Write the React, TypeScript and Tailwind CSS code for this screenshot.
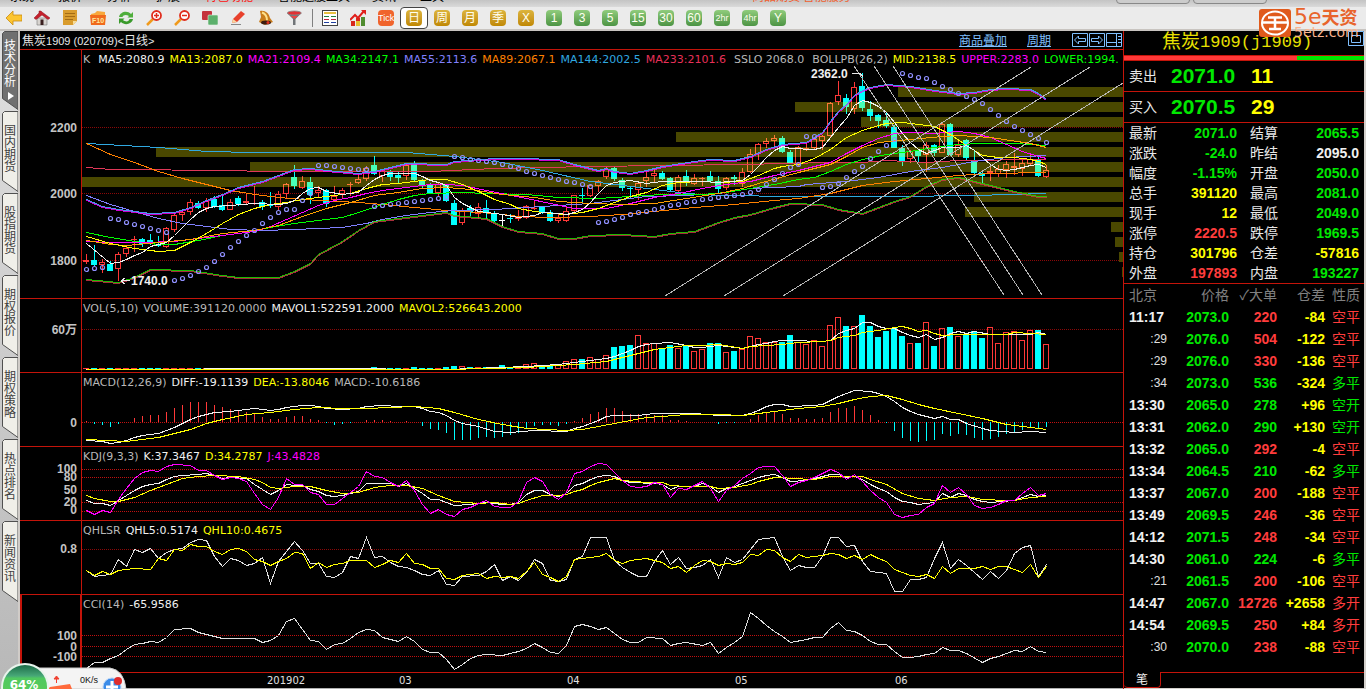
import React from "react";

const STEP = 8;
const xAt = (i: number) => 4 + i * STEP;

// [high, body top, body bottom, low, kind] kind: 1 up, 0 down, 2 flat
const CANDLES: number[][] = [
  [204, 210, 212, 214, 1], [195, 210, 215, 216, 0], [209, 212, 215, 223, 1], [211, 214, 221, 221, 0], [202, 204, 219, 231, 1],
  [196, 198, 204, 207, 1], [186, 189, 190, 202, 1], [188, 189, 194, 197, 0], [184, 190, 193, 195, 0], [186, 195, 196, 197, 0],
  [177, 178, 197, 198, 1], [163, 165, 180, 182, 1], [159, 162, 165, 171, 1], [149, 152, 162, 165, 1], [151, 153, 158, 159, 0],
  [148, 151, 158, 162, 1], [146, 149, 157, 158, 0], [145, 155, 160, 161, 0], [149, 152, 160, 160, 1], [146, 148, 154, 156, 0],
  [144, 151, 153, 154, 1], [136, 153, 154, 155, 1], [150, 152, 157, 160, 0], [142, 154, 156, 158, 0], [141, 144, 157, 160, 1],
  [133, 134, 144, 148, 1], [115, 127, 136, 139, 0], [126, 131, 138, 139, 1], [127, 132, 145, 154, 0], [136, 140, 143, 148, 1],
  [139, 140, 154, 157, 0], [136, 146, 150, 152, 1], [138, 140, 144, 148, 1], [132, 134, 135, 146, 1], [124, 129, 133, 134, 1],
  [116, 118, 129, 131, 1], [106, 115, 124, 125, 0], [119, 121, 126, 132, 1], [120, 121, 127, 131, 0], [122, 125, 128, 133, 0],
  [114, 115, 126, 130, 1], [111, 114, 130, 132, 0], [129, 130, 136, 139, 0], [133, 134, 143, 144, 0], [132, 134, 143, 146, 1],
  [134, 135, 151, 152, 0], [150, 153, 175, 175, 0], [158, 160, 173, 175, 1], [155, 158, 162, 166, 0], [153, 157, 164, 169, 1],
  [150, 158, 163, 169, 0], [161, 164, 171, 172, 0], [165, 170, 171, 176, 2], [164, 168, 169, 173, 0], [160, 167, 169, 171, 1],
  [155, 156, 168, 169, 1], [151, 158, 159, 160, 1], [157, 157, 162, 164, 0], [160, 162, 171, 172, 0], [164, 168, 171, 173, 1],
  [157, 161, 171, 172, 1], [145, 145, 161, 162, 1], [138, 145, 146, 152, 0], [134, 135, 146, 147, 1], [130, 131, 136, 142, 1],
  [117, 119, 127, 129, 1], [117, 118, 129, 131, 0], [128, 130, 138, 141, 0], [136, 138, 139, 148, 0], [132, 133, 140, 150, 1],
  [121, 127, 131, 137, 1], [119, 123, 126, 132, 1], [121, 123, 129, 130, 0], [127, 128, 140, 141, 0], [125, 127, 141, 142, 1],
  [120, 126, 132, 136, 0], [124, 128, 134, 135, 1], [127, 128, 129, 136, 1], [121, 126, 131, 133, 0], [126, 131, 139, 144, 0],
  [127, 128, 138, 140, 1], [125, 127, 129, 135, 0], [118, 122, 134, 137, 1], [99, 104, 122, 123, 1], [93, 94, 104, 110, 1],
  [88, 91, 94, 98, 1], [85, 88, 91, 96, 1], [86, 88, 102, 103, 0], [100, 102, 113, 114, 0], [96, 97, 115, 116, 1],
  [92, 98, 99, 101, 1], [87, 89, 98, 99, 1], [85, 86, 91, 100, 1], [52, 53, 86, 88, 1], [31, 45, 52, 55, 1],
  [44, 48, 57, 64, 0], [32, 37, 59, 64, 1], [23, 36, 58, 61, 0], [51, 59, 66, 71, 0], [64, 65, 71, 78, 0],
  [62, 70, 76, 78, 0], [75, 77, 98, 98, 0], [95, 98, 111, 116, 0], [100, 101, 109, 113, 1], [100, 101, 106, 112, 0],
  [92, 95, 105, 122, 1], [94, 95, 103, 106, 0], [73, 74, 103, 103, 1], [73, 74, 105, 106, 0], [91, 95, 105, 107, 1],
  [89, 90, 108, 110, 0], [100, 111, 123, 124, 0], [121, 123, 126, 133, 0], [117, 121, 123, 131, 1], [115, 119, 124, 127, 1],
  [111, 114, 120, 128, 1], [103, 116, 118, 125, 1], [110, 113, 119, 126, 1], [104, 109, 114, 115, 1], [105, 110, 126, 127, 0],
  [115, 120, 127, 128, 1],
];

// volume profile: [left, top]
const PROFILE = [
  [816, 37], [713, 52], [779, 67], [594, 82], [74, 97], [168, 112], [0, 127],
  [892, 142], [883, 157], [1029, 172], [1033, 187], [1037, 202], [1040, 217],
];

const SAR = [
  219, 218, 217, 168, 169, 172, 174, 176, 178, 180, 182, 230, 228, 225, 221, 217, 211, 204, 197, 191, 185, 180, 173, 167,
  162, 159, 159, 150, 143, 115, 115, 116, 117, 118, 119, 119, 156, 155, 154, 153, 152, 151, 150, 149, 148, 147, 106, 107,
  109, 110, 111, 112, 114, 116, 118, 121, 123, 125, 127, 129, 131, 132, 134, 136, 172, 171, 169, 167, 164, 162, 161, 159,
  157, 155, 154, 152, 151, 149, 148, 147, 146, 145, 144, 142, 139, 134, 129, 123, 117, 114, 86, 86, 137, 136, 133, 127,
  121, 116, 108, 101, 95, 89, 23, 25, 27, 28, 32, 36, 39, 43, 46, 49, 53, 59, 65, 71, 76, 80, 84, 88, 92,
];

const UPPER =
  "0,149 2,156 4,159 8,163 11,162 13,157 15,150 17,144 19,137 22,131 24,125 26,119 28,118 30,120 34,123 36,121 38,117 40,113 45,114 46,111 51,108 54,108 59,109 61,114 63,118 64,120 65,118 66,121 68,123 70,120 72,116 76,111 78,109 81,110 83,106 85,99 87,94 90,92 91,87 92,82 93,71 94,61 95,54 96,45 97,40 98,37 100,34 103,36 106,40 109,43 111,42 113,39 115,38 118,39 119,43 120,49";
const LOWER =
  "0,229 4,232 6,227 8,219 13,220 17,225 19,227 24,227 26,221 28,213 29,204 32,191 34,180 36,171 39,168 42,165 45,162 46,165 50,168 52,176 54,181 57,183 59,188 61,188 63,185 67,184 71,186 73,183 76,181 79,172 81,167 83,164 86,157 88,153 92,154 94,159 97,163 99,157 101,151 103,146 105,136 107,129 109,127 111,131 114,137 116,141 119,146 120,146";

const MA_LINES: [string, string][] = [
  ["#e03858", "0,117 3,119 18,120 22,121 43,121 51,118 63,116 82,114 93,112 97,112 100,110 105,112 109,110 120,109"],
  ["#30a8e0", "0,93 9,97 15,101 21,102 40,102 46,106 51,111 52,112 57,120 63,131 67,135 71,139 75,143 79,145 89,146 101,146 111,145 120,143"],
  ["#ff8000", "0,93 3,104 6,112 9,121 12,128 15,134 18,140 21,144 24,147 29,150 34,152 37,154 41,157 45,160 51,163 54,166 58,167 63,166 67,164 71,161 76,157 81,154 86,150 89,148 93,143 97,135 101,131 105,128 109,125 113,123 120,122"],
  ["#8080ff", "0,145 3,154 6,161 9,168 12,173 15,176 18,179 22,180 26,179 32,177 35,173 37,169 40,165 43,162 46,160 51,159 55,157 59,155 63,153 67,149 70,146 75,145 79,143 83,138 89,136 90,134 95,131 99,127 103,121 107,117 111,111 115,107 120,105"],
  ["#00ff00", "0,182 3,187 6,191 9,194 11,194 14,190 17,185 20,182 23,177 26,173 29,170 32,167 34,162 37,154 39,149 41,145 43,143 47,142 50,143 55,144 59,147 64,148 68,146 72,144 77,144 80,142 83,138 86,134 89,129 91,127 93,121 95,114 97,109 100,104 103,101 106,97 109,94 112,93 116,93 120,95"],
  ["#ff00ff", "0,191 3,192 7,192 11,191 15,187 19,183 21,181 23,176 25,169 27,162 29,155 31,150 33,147 35,143 37,140 39,138 41,136 43,134 45,134 47,135 50,140 55,148 58,153 61,158 65,158 68,153 71,147 74,143 77,138 80,134 83,131 86,125 89,120 93,112 95,103 97,95 99,88 101,83 103,82 106,83 109,81 111,83 113,87 115,94 117,101 119,106 120,108"],
  ["#ffa000", "0,190 3,194 5,195 9,192 13,189 17,183 21,180 24,175 27,166 30,158 33,152 36,145 39,142 42,138 45,137 48,139 52,144 56,147 59,151 63,153 67,154 71,153 75,148 79,143 82,138 84,133 89,122 93,114 95,106 97,97 99,92 103,89 107,86 109,85 113,87 118,93 120,97"],
  ["#ffff00", "0,186 3,193 6,198 9,201 11,200 13,192 15,183 17,173 19,164 21,158 23,154 25,152 27,149 29,147 31,145 33,143 35,138 37,134 39,133 41,131 43,129 45,129 47,134 49,141 51,149 53,154 54,158 56,161 58,163 60,164 62,162 64,158 66,152 68,146 70,142 72,135 74,132 77,131 79,132 82,131 84,125 86,118 87,116 89,114 91,108 93,99 95,87 97,80 99,75 100,73 102,72 104,74 106,76 107,80 108,84 110,95 112,105 114,107 116,107 118,109 119,111 120,114"],
  ["#f0f0f0", "0,193 3,213 4,212 5,209 6,205 7,202 8,196 9,194 10,192 11,185 12,177 13,169 14,162 15,158 16,156 18,155 21,153 24,154 25,153 26,150 27,143 28,138 29,137 30,141 32,144 34,142 35,135 36,129 37,125 38,123 41,123 42,126 43,130 44,132 45,135 46,147 47,153 48,157 49,161 50,162 51,163 52,164 54,167 56,165 57,162 59,163 60,164 61,162 62,159 63,152 64,143 65,135 66,132 68,130 70,133 72,131 77,131 79,132 82,130 83,124 84,116 85,107 86,100 87,96 88,98 91,99 92,97 93,87 94,77 95,68 96,55 97,50 98,52 99,56 100,62 101,72 102,83 103,92 104,99 105,103 106,100 107,97 109,97 110,95 111,100 112,107 113,114 114,119 115,120 116,119 117,117 118,115 119,114 120,117"],
];

const TRENDS = [
  [583, 246, 949, 17], [642, 246, 1008, 17], [701, 246, 1041, 33],
  [772, 16, 922, 245], [792, 16, 941, 245], [811, 16, 960, 245],
];

const VOLUME = [
  1, 1, 1, 1, 1, 1, 1, 1, 1, 1, 1, 1, 1, 1, 1, 1, 1, 1, 1, 1, 1, 1, 1, 1, 1, 1, 1, 1, 1, 1, 1, 1, 1, 1, 1, 1, 2, 1, 1, 1,
  1, 2, 1, 1, 1, 2, 3, 3, 2, 2, 2, 2, 4, 2, 2, 5, 6, 3, 4, 5, 8, 10, 10, 12, 10, 14, 22, 23, 24, 34, 26, 26, 21, 24, 21,
  24, 18, 20, 26, 26, 17, 18, 20, 33, 31, 27, 27, 27, 34, 27, 25, 29, 23, 44, 52, 43, 43, 54, 43, 32, 38, 41, 33, 26, 26,
  47, 23, 41, 42, 33, 35, 38, 31, 42, 26, 37, 38, 29, 39, 39, 25,
];
const VOL_LINES: [string, string][] = [
  ["#f0f0f0", "0,70 30,69 45,70 55,67 59,65 61,63 63,61 65,59 66,57 67,54 68,51 69,47 70,45 71,44 73,43 75,46 76,48 77,48 79,46 81,48 82,49 83,47 84,45 85,44 86,42 87,41 89,41 91,42 92,42 93,41 94,34 95,31 96,29 97,23 98,23 99,27 100,29 101,29 102,33 103,36 104,38 105,35 106,40 107,38 108,34 109,32 110,34 111,32 113,35 115,35 118,35 119,33 120,35"],
  ["#ffff00", "0,70 45,70 55,68 61,65 65,62 67,58 69,54 71,50 73,48 75,46 77,46 79,45 82,49 83,47 85,46 87,45 89,43 92,42 93,41 94,38 96,36 97,33 98,32 99,31 101,28 102,27 103,29 104,32 105,31 106,34 107,36 109,35 112,35 115,35 116,33 120,35"],
];

const MACD = [
  1, -2, -3, -5, -2, 0, 4, 6, 7, 7, 10, 14, 17, 20, 20, 20, 17, 15, 13, 11, 10, 8, 5, 3, 3, 5, 6, 6, 3, 2, -1, -3, -2, -1,
  0, 2, 2, 2, 1, 0, 1, 0, -4, -7, -8, -11, -18, -18, -18, -16, -15, -16, -15, -13, -11, -6, -4, -3, -3, -4, -2, 1, 4, 8,
  10, 14, 14, 11, 8, 8, 7, 7, 7, 2, 2, 1, 0, 0, 0, -2, -1, -1, 0, 3, 7, 9, 11, 8, 4, 4, 3, 3, 4, 10, 14, 14, 16, 12, 7,
  2, -1, -9, -16, -19, -20, -19, -18, -12, -14, -12, -13, -16, -18, -17, -15, -12, -10, -8, -6, -7, -5,
];
const MACD_LINES: [string, string][] = [
  ["#f0f0f0", "0,67 2,68 3,70 4,69 5,67 6,64 7,62 9,60 10,57 11,54 12,50 13,46 14,43 15,41 16,39 18,38 21,35 23,37 24,36 25,34 27,32 28,32 29,33 30,35 32,36 34,35 35,33 37,32 39,33 41,33 42,35 43,38 44,39 45,42 46,47 47,50 49,53 51,58 53,59 56,57 60,58 61,55 62,53 63,50 64,47 65,43 66,42 69,42 71,40 73,40 76,40 79,42 82,42 83,40 84,37 85,33 86,31 87,31 88,33 91,32 92,31 93,27 94,23 95,20 96,17 98,18 99,20 100,23 101,28 102,34 103,38 104,41 105,43 106,45 107,43 108,46 109,46 110,50 112,55 113,57 116,59 118,58 120,59"],
  ["#ffff00", "0,66 5,68 9,64 11,60 13,56 15,50 17,46 20,41 23,39 26,36 29,34 32,35 35,35 38,34 41,33 44,35 46,39 49,46 52,51 55,55 60,57 62,56 64,53 66,50 68,47 70,44 72,43 75,41 79,41 82,42 85,39 87,37 89,35 92,33 94,30 95,28 96,26 98,23 100,22 102,26 104,31 106,35 109,40 112,45 115,51 118,54 120,56"],
];

const KDJ_LINES: [string, string][] = [
  ["#f0f0f0", "0,53 1,56 2,56 3,58 4,53 5,48 6,43 7,39 8,37 9,36 10,32 11,29 12,28 14,27 15,26 16,28 17,31 18,30 20,31 21,37 22,42 23,47 24,43 25,37 26,38 27,38 28,42 29,44 30,48 31,49 32,48 33,46 34,44 35,36 38,36 39,39 40,36 41,41 42,46 43,52 44,52 45,55 46,58 48,57 50,55 52,57 53,57 54,55 55,47 56,43 57,43 58,47 59,49 60,46 61,38 62,36 63,32 64,29 65,28 66,29 67,33 68,35 71,36 72,37 73,42 74,39 76,39 77,36 78,39 79,45 80,41 81,39 82,36 83,33 84,30 85,28 86,27 87,30 88,34 90,33 92,29 93,27 94,27 95,30 96,29 97,32 98,37 99,41 100,44 101,50 102,54 103,55 104,57 105,56 106,55 107,46 108,50 109,46 110,48 111,52 112,54 113,55 116,53 117,50 118,47 119,49 120,48"],
  ["#ffff00", "0,48 1,51 3,54 4,54 6,50 8,43 10,37 12,31 14,29 16,28 19,29 21,32 22,35 23,40 24,41 26,39 28,39 30,43 32,46 34,45 36,40 38,38 40,38 42,41 44,48 46,54 49,56 51,55 53,57 54,56 55,53 57,48 59,48 60,47 61,44 62,42 63,38 64,35 65,33 66,31 67,33 70,35 72,35 73,38 75,39 78,39 79,41 81,40 83,37 84,34 86,30 87,30 88,31 91,32 93,29 97,29 98,32 100,37 102,46 104,51 106,53 108,50 110,49 112,52 115,53 116,53 118,50 120,49"],
  ["#ff00ff", "0,63 1,67 2,63 3,65 4,52 5,41 6,31 7,25 8,23 9,24 10,19 11,17 13,18 14,23 15,23 16,28 17,32 18,30 19,31 20,34 21,46 22,57 23,62 24,50 25,31 26,37 27,37 28,45 29,47 30,57 31,57 32,51 33,45 34,39 35,24 36,29 37,30 38,35 39,39 40,33 41,43 42,57 43,66 44,62 45,67 46,69 47,62 48,60 49,56 50,53 51,59 52,60 53,60 54,54 55,35 56,30 57,34 58,47 59,52 60,45 61,26 62,24 63,19 64,16 65,17 66,25 67,33 68,39 69,40 70,39 71,35 72,37 73,50 74,41 75,42 76,38 77,34 78,41 79,54 80,43 81,38 82,31 83,26 84,20 85,19 86,19 87,28 88,39 89,35 90,33 91,30 92,26 93,22 94,25 95,32 96,27 97,34 98,43 99,50 100,55 101,67 102,70 103,68 104,67 105,60 106,56 107,38 108,45 109,40 110,47 111,58 112,61 113,60 114,57 115,53 116,53 117,46 118,40 119,48 120,46"],
];

const QHL_LINES: [string, string][] = [
  ["#e0e0e0", "0,49 1,55 2,54 3,53 4,38 5,45 6,28 7,31 8,27 9,37 10,31 11,28 12,27 13,21 14,18 15,19 16,35 17,45 18,37 19,39 20,44 21,42 22,36 23,62 24,40 25,30 26,20 27,29 28,42 29,42 30,55 31,56 32,51 33,35 34,37 35,16 36,36 37,35 38,41 39,45 40,46 41,49 42,53 43,54 44,49 45,63 46,64 47,55 49,54 50,50 51,43 52,59 53,55 54,59 55,51 56,38 57,42 58,59 59,60 60,58 61,38 62,35 63,16 65,16 66,39 67,46 68,51 69,55 70,55 71,40 72,29 73,43 74,36 75,47 76,46 77,44 78,38 79,56 80,36 81,41 82,38 83,28 84,18 86,16 87,35 88,49 89,44 90,46 91,46 92,35 93,16 94,16 95,25 96,24 97,40 98,50 99,51 100,52 101,70 102,70 103,58 104,58 105,56 106,37 107,21 108,47 109,38 110,44 111,51 112,58 113,50 114,57 115,49 116,32 117,26 118,24 119,55 120,43"],
  ["#ffff00", "0,49 1,54 2,50 3,53 4,49 6,47 8,48 9,37 10,39 11,28 12,29 13,23 14,25 15,25 16,30 17,33 18,28 19,27 20,30 21,38 22,40 23,44 24,40 25,37 26,31 27,32 28,47 29,41 30,46 31,43 32,42 33,39 35,39 36,46 37,43 38,39 39,41 40,32 41,42 42,43 43,47 44,47 45,57 46,58 47,54 49,52 50,57 51,55 52,56 53,55 54,57 55,50 56,41 57,53 58,56 59,60 60,55 61,38 62,37 63,36 64,35 65,32 66,39 67,42 68,39 70,37 72,41 73,47 74,45 75,51 76,44 77,39 78,40 79,44 80,42 81,43 82,41 83,33 84,34 85,28 86,29 87,36 88,40 89,33 90,36 92,34 93,32 94,33 95,37 96,34 97,38 98,33 99,37 100,40 101,48 102,51 103,54 104,55 105,53 106,57 107,45 108,52 109,47 111,47 112,45 113,48 114,45 115,45 116,48 117,51 118,43 119,56 120,45"],
];

const CCI_LINES: [string, string][] = [
  ["#e0e0e0", "0,73 1,67 2,67 3,63 4,60 5,54 6,49 7,48 8,46 9,47 10,42 11,34 13,33 14,37 15,39 17,43 21,43 22,47 23,45 24,40 25,26 26,23 27,34 28,45 29,46 30,54 31,49 32,48 33,43 34,37 35,34 36,35 37,42 38,44 39,46 40,41 41,46 42,54 43,57 44,57 45,64 46,74 47,69 48,63 49,60 50,59 52,60 54,56 55,53 56,48 57,52 58,57 59,58 60,50 61,31 62,29 63,31 64,34 65,32 66,38 67,44 68,47 69,47 70,42 72,43 73,50 74,48 75,47 77,50 78,47 79,58 80,52 81,47 82,41 83,17 84,23 85,30 86,36 87,41 88,47 90,44 91,42 92,42 93,33 94,27 95,35 96,36 97,40 98,46 99,49 100,49 101,56 102,62 103,62 104,61 105,59 106,58 107,52 108,55 109,55 110,58 112,67 113,63 114,61 115,58 116,55 117,56 118,51 119,56 120,57"],
];

function Line({ pts, color, dy = 0, opacity }: { pts: string; color: string; dy?: number; opacity?: number }) {
  const points = pts
    .split(" ")
    .map((p) => {
      const [i, y] = p.split(",").map(Number);
      return `${xAt(i) + 0.5},${y + dy + 0.5}`;
    })
    .join(" ");
  return <polyline points={points} fill="none" stroke={color} opacity={opacity} />;
}

function Lines({ data }: { data: [string, string][] }) {
  return (
    <>
      {data.map(([color, pts]) => (
        <Line key={color} pts={pts} color={color} />
      ))}
    </>
  );
}

function Candles({ up, down }: { up: string; down: string }) {
  return (
    <>
      {CANDLES.map(([h, t, b, l, kind], i) => {
        const x = xAt(i);
        if (b - t <= 1) {
          const c = kind === 2 ? "#ffffff" : kind ? up : down;
          return (
            <path key={i} d={`M${x + 0.5} ${h}V${l}M${x - 3} ${t + 0.5}h6`} stroke={c} fill="none" />
          );
        }
        if (kind === 0) {
          return (
            <g key={i} fill={down}>
              <rect x={x} y={h} width={1} height={l - h} />
              <rect x={x - 3} y={t} width={6} height={b - t} />
            </g>
          );
        }
        return (
          <path
            key={i}
            d={`M${x + 0.5} ${h}V${t}M${x + 0.5} ${b}V${l}M${x - 2.5} ${t + 0.5}h5v${b - t - 1}h-5z`}
            stroke={up}
            fill="none"
          />
        );
      })}
    </>
  );
}

type Item = { text: string; className: string };

function Legend({ items }: { items: Item[] }) {
  return (
    <div className="absolute inset-x-0 top-0 flex gap-[5px] overflow-hidden pl-px font-['DejaVu_Sans',sans-serif] text-[11px] leading-5 whitespace-nowrap">
      {items.map((it) => (
        <span key={it.text} className={it.className}>
          {it.text}
        </span>
      ))}
    </div>
  );
}

function Panel({
  height,
  ticks,
  grid,
  gridColor = "#c01010",
  legend,
  active,
  children,
}: {
  height: string;
  ticks: [string, number][];
  grid: number[];
  gridColor?: string;
  legend: Item[];
  active?: boolean;
  children: React.ReactNode;
}) {
  return (
    <section className={`flex border-t border-[#c4140a] ${height}`}>
      <div
        className={`w-[62px] shrink-0 border-r ${
          active ? "border-r-2 border-l-2 border-[#c4140a]" : "border-[#c4140a]"
        }`}
      >
        <svg className={active ? "ml-[-2px] h-full w-[61px]" : "h-full w-[61px]"}>
          <g
            fill="#c4c4c4"
            textAnchor="end"
            className="font-['Liberation_Sans','Noto_Sans_CJK_SC',sans-serif] text-[12px] font-bold"
          >
            {ticks.map(([label, y]) => (
              <text key={label} x={57} y={y + 4}>
                {label}
              </text>
            ))}
          </g>
        </svg>
      </div>
      <div className="relative min-w-0 flex-1">
        <svg className="block h-full w-full" shapeRendering="crispEdges">
          {grid.map((y) => (
            <line key={y} x1="0" x2="100%" y1={y + 0.5} y2={y + 0.5} stroke={gridColor} strokeDasharray="1 1" />
          ))}
          {children}
        </svg>
        <Legend items={legend} />
      </div>
    </section>
  );
}

const WHITE = "text-[#f0f0f0]";
const GREY = "text-[#b8b8b8]";
const YELLOW = "text-[#ffff00]";
const MAGENTA = "text-[#ff00ff]";

function Charts() {
  return (
    <>
      <Panel
        height="h-[249px]"
        ticks={[["2200", 78], ["2000", 144], ["1800", 211]]}
        grid={[77, 143, 210]}
        gridColor="#8a0808"
        legend={[
          { text: "K", className: `${GREY} mr-[3px]` },
          { text: "MA5:2080.9", className: WHITE },
          { text: "MA13:2087.0", className: YELLOW },
          { text: "MA21:2109.4", className: MAGENTA },
          { text: "MA34:2147.1", className: "text-[#00ff00]" },
          { text: "MA55:2113.6", className: "text-[#8080ff]" },
          { text: "MA89:2067.1", className: "text-[#ff8000]" },
          { text: "MA144:2002.5", className: "text-[#30a8e0]" },
          { text: "MA233:2101.6", className: "text-[#e83058]" },
          { text: "SSLO 2068.0", className: `${GREY} mx-[3px]` },
          { text: "BOLLPB(26,2)", className: GREY },
          { text: "MID:2138.5", className: YELLOW },
          { text: "UPPER:2283.0", className: MAGENTA },
          { text: "LOWER:1994.", className: "text-[#00ff00]" },
        ]}
      >
        <defs>
          <clipPath id="profile">
            {PROFILE.map(([x, y]) => (
              <rect key={y} x={x} y={y} width={1400} height={10} />
            ))}
          </clipPath>
        </defs>
        {PROFILE.map(([x, y]) => (
          <rect key={y} x={x} y={y} width="100%" height={10} fill="#4a4800" />
        ))}
        <Candles up="#ff3838" down="#00ffff" />
        <g clipPath="url(#profile)">
          <Candles up="#ff7838" down="#48ffb8" />
        </g>
        <Lines data={MA_LINES} />
        <Line pts={UPPER} color="#ff00ff" dy={1} opacity={0.8} />
        <Line pts={UPPER} color="#4898f0" />
        <Line pts={LOWER} color="#20e800" opacity={0.8} />
        <Line pts={LOWER} color="#d03848" dy={1} opacity={0.8} />
        {SAR.map((y, i) => (
          <circle
            key={i}
            cx={xAt(i) + 0.5}
            cy={y + 0.5}
            r={2}
            fill="none"
            stroke="#9090ff"
            strokeWidth={1.2}
            shapeRendering="auto"
          />
        ))}
        {TRENDS.map(([x1, y1, x2, y2]) => (
          <line key={x1} x1={x1} y1={y1} x2={x2} y2={y2} stroke="#b8b8b8" />
        ))}
        <path d="M770 23.5h8l3 3M40 230.5h8M43 228l-4 3 4 3" stroke="#e8e8e8" fill="none" />
        <g fill="#f0f0f0" className="font-['Liberation_Sans',sans-serif] text-[12px] font-bold">
          <text x={729} y={28}>2362.0</text>
          <text x={49} y={235}>1740.0</text>
        </g>
      </Panel>

      <Panel
        height="h-[74px]"
        ticks={[["60万", 31]]}
        grid={[30]}
        gridColor="#8a0808"
        legend={[
          { text: "VOL(5,10)", className: GREY },
          { text: "VOLUME:391120.0000", className: GREY },
          { text: "MAVOL1:522591.2000", className: WHITE },
          { text: "MAVOL2:526643.2000", className: YELLOW },
        ]}
      >
        {VOLUME.map((h, i) =>
          CANDLES[i][4] === 1 && h > 2 ? (
            <rect key={i} x={xAt(i) - 2.5} y={70.5 - h} width={5} height={h - 1} fill="none" stroke="#ff3838" />
          ) : (
            <rect key={i} x={xAt(i) - 3} y={70 - h} width={6} height={h} fill={CANDLES[i][4] === 1 ? "#ff3838" : "#00ffff"} />
          )
        )}
        <Lines data={VOL_LINES} />
      </Panel>

      <Panel
        height="h-[74px]"
        ticks={[["0", 50]]}
        grid={[49]}
        legend={[
          { text: "MACD(12,26,9)", className: GREY },
          { text: "DIFF:-19.1139", className: WHITE },
          { text: "DEA:-13.8046", className: YELLOW },
          { text: "MACD:-10.6186", className: GREY },
        ]}
      >
        {MACD.map((v, i) => (
          <rect key={i} x={xAt(i)} y={v > 0 ? 49 - v : 49} width={1} height={Math.abs(v)} fill={v > 0 ? "#ff3838" : "#00ffff"} />
        ))}
        <Lines data={MACD_LINES} />
      </Panel>

      <Panel
        height="h-[74px]"
        ticks={[["100", 22], ["80", 30], ["50", 43], ["20", 55], ["0", 63]]}
        grid={[22, 30, 43, 55, 64]}
        legend={[
          { text: "KDJ(9,3,3)", className: GREY },
          { text: "K:37.3467", className: WHITE },
          { text: "D:34.2787", className: YELLOW },
          { text: "J:43.4828", className: MAGENTA },
        ]}
      >
        <Lines data={KDJ_LINES} />
      </Panel>

      <Panel
        height="h-[74px]"
        ticks={[["0.8", 28]]}
        grid={[28]}
        gridColor="#8a0808"
        legend={[
          { text: "QHLSR", className: GREY },
          { text: "QHL5:0.5174", className: WHITE },
          { text: "QHL10:0.4675", className: YELLOW },
        ]}
      >
        <Lines data={QHL_LINES} />
      </Panel>

      <Panel
        height="h-[78px]"
        active
        ticks={[["100", 41], ["0", 52], ["-100", 62]]}
        grid={[40, 51, 61]}
        legend={[
          { text: "CCI(14)", className: GREY },
          { text: "-65.9586", className: WHITE },
        ]}
      >
        <Lines data={CCI_LINES} />
      </Panel>

      <div className="h-4 border-t border-[#c4140a]">
        <svg className="block h-full w-full">
          <g fill="#e0e0e0" className="font-['DejaVu_Sans',sans-serif] text-[10px]">
            <text x={247} y={11}>201902</text>
            <text x={379} y={11}>03</text>
            <text x={547} y={11}>04</text>
            <text x={715} y={11}>05</text>
            <text x={875} y={11}>06</text>
          </g>
        </svg>
      </div>
    </>
  );
}

const TOOLS: { label: string; icon: React.ReactNode }[] = [
  { label: "后退", icon: <path d="M0 8l7-7v4h9v6H7v4z" fill="#fcc531" stroke="#c98a10" strokeWidth=".8" /> },
  {
    label: "首页",
    icon: (
      <>
        <path d="M3 8h10v7H3z" fill="#d8d4d0" stroke="#777" strokeWidth=".6" />
        <path d="M0 8l5-5V1h2l1 1 8 6-2 1.5L8 5 2 9.500z" fill="#c4202c" stroke="#8c1420" strokeWidth=".5" />
        <path d="M6.500 9.500h3V15h-3z" fill="#3a2020" />
      </>
    ),
  },
  {
    label: "便签",
    icon: (
      <>
        <path d="M1 0h14v11l-4 4H1z" fill="#d99c2e" />
        <path d="M15 11l-4 4v-4z" fill="#f6dc98" />
        <path d="M3 3.500h10M3 6.500h10M3 9.500h8" stroke="#a46c14" />
      </>
    ),
  },
  {
    label: "F10",
    icon: (
      <>
        <path d="M1 4l4-1 2-2 8 1v11l-13 2z" fill="#f8a83c" />
        <path d="M0 5h16l-1 10H1z" fill="#f06a1c" />
        <text x="8" y="13" textAnchor="middle" fontSize="7" fontWeight="bold" fill="#ffe9a0" fontFamily="Liberation Sans">F10</text>
      </>
    ),
  },
  {
    label: "刷新",
    icon: (
      <>
        <path d="M1 7c1-5 8-7 12-3l2-2v5.500H9.500l1.500-1.500C8 4 5 5 4.500 7z" fill="#4fae3c" />
        <path d="M15 9c-1 5-8 7-12 3l-2 2V8.500h5.500L5 10c3 2.500 6 1.500 6.500-1z" fill="#3a9a2c" />
      </>
    ),
  },
  {
    label: "放大",
    icon: (
      <>
        <path d="M7 9l-6 6" stroke="#f09a1c" strokeWidth="2.500" />
        <circle cx="10.500" cy="5.500" r="4.500" fill="#fff" stroke="#e02c1c" strokeWidth="1.800" />
        <path d="M8 5.500h5M10.500 3v5" stroke="#e02c1c" strokeWidth="1.500" />
      </>
    ),
  },
  {
    label: "缩小",
    icon: (
      <>
        <path d="M7 9l-6 6" stroke="#f09a1c" strokeWidth="2.500" />
        <circle cx="10.500" cy="5.500" r="4.500" fill="#fff" stroke="#e02c1c" strokeWidth="1.800" />
        <path d="M8 5.500h5" stroke="#e02c1c" strokeWidth="1.500" />
      </>
    ),
  },
  {
    label: "叠加",
    icon: (
      <>
        <rect x="0" y="1" width="10" height="9" rx="1" fill="#c4323c" />
        <rect x="6" y="5" width="10" height="10" rx="1" fill="#5cb06c" stroke="#e4f0e4" strokeWidth=".6" />
      </>
    ),
  },
  {
    label: "画线",
    icon: (
      <>
        <path d="M3 9l8-8 4 3-8 8-5 1z" fill="#e8402c" />
        <path d="M2 13l1-4 4 3z" fill="#f8d8a0" />
        <path d="M1 14.500h10" stroke="#888" />
      </>
    ),
  },
  {
    label: "预警",
    icon: (
      <>
        <path d="M2 1c5-1 9 2 10 7l3 4-8 3-6-3 2-5z" fill="#c87c1c" />
        <path d="M4 2.500c3 1 5 4 5 8" stroke="#ffe08a" strokeWidth="2" fill="none" />
        <ellipse cx="8" cy="12.500" rx="5" ry="2" fill="#3c1c10" />
        <circle cx="10" cy="12.500" r="1.500" fill="#e03020" />
      </>
    ),
  },
  {
    label: "筛选",
    icon: (
      <>
        <path d="M1 3l6 6v6h2.500V9l6-6z" fill="#707478" />
        <ellipse cx="8.300" cy="3" rx="7" ry="2" fill="#e03034" stroke="#888" strokeWidth=".8" />
        <path d="M4.500 6h7.500L8.500 9z" fill="#e44" />
      </>
    ),
  },
];

const PERIODS: { label: string; tone: "gold" | "green" }[] = [
  { label: "日", tone: "gold" },
  { label: "周", tone: "gold" },
  { label: "月", tone: "gold" },
  { label: "季", tone: "gold" },
  { label: "X", tone: "gold" },
  { label: "1", tone: "green" },
  { label: "3", tone: "green" },
  { label: "5", tone: "green" },
  { label: "15", tone: "green" },
  { label: "30", tone: "green" },
  { label: "60", tone: "green" },
  { label: "2hr", tone: "green" },
  { label: "4hr", tone: "green" },
  { label: "Y", tone: "green" },
];

function Toolbar() {
  return (
    <div className="flex h-6 items-center border-b-2 border-[#c8c4c0] bg-[#ebebeb]">
      {TOOLS.map((t) => (
        <button key={t.label} aria-label={t.label} className="flex w-7 justify-center">
          <svg width="16" height="16" viewBox="0 0 16 16">
            {t.icon}
          </svg>
        </button>
      ))}
      <div className="flex w-2 justify-center">
        <div className="h-[18px] w-px bg-[#808080]" />
      </div>
      <button aria-label="报价列表" className="flex w-7 justify-center">
        <svg width="16" height="16" viewBox="0 0 16 16">
          <rect x=".5" y=".5" width="15" height="15" fill="#fff" stroke="#444" />
          <path d="M2 3h12" stroke="#e8c040" strokeWidth="2" />
          <path d="M2 6.500h5M9 6.500h5" stroke="#208040" />
          <path d="M2 9.500h5M9 9.500h5" stroke="#c02040" />
          <path d="M2 12.500h5M9 12.500h5" stroke="#2040a0" />
        </svg>
      </button>
      <button aria-label="分时图" className="flex w-7 justify-center">
        <svg width="16" height="16" viewBox="0 0 16 16">
          <path d="M1 11h4v5H1zM6 8h4v8H6z" fill="#d8281c" />
          <path d="M6 11h4v5H6z" fill="#e8c030" />
          <path d="M11 7h4v9h-4z" fill="#508c30" />
          <path d="M0 10l5-5 3 3 6-7" stroke="#e0201c" strokeWidth="2" fill="none" />
          <path d="M11 0h5v5z" fill="#e0201c" />
        </svg>
      </button>
      <button className="flex w-7 justify-center">
        <span className="h-4 w-4 rounded-sm bg-[#f0642c] text-center font-['Liberation_Sans'] text-[9px] leading-4 text-white">
          Tick
        </span>
      </button>
      {PERIODS.map((p, i) => (
        <button
          key={p.label}
          className={`flex h-[22px] w-7 items-center justify-center ${
            i === 0 ? "rounded-sm border border-[#444] bg-white" : ""
          }`}
        >
          <span
            className={`h-4 w-4 rounded-sm bg-linear-to-b text-center font-['Liberation_Sans','Noto_Sans_CJK_SC',sans-serif] leading-4 text-[#fffff0] ${
              p.tone === "gold" ? "from-[#dcb43c] to-[#c08800]" : "from-[#90cc7c] to-[#4c9444]"
            } ${p.label.length > 2 ? "text-[9px]" : "text-[12px]"}`}
          >
            {p.label}
          </span>
        </button>
      ))}
    </div>
  );
}

function MenuBar() {
  return (
    <div className="relative flex h-[7px] items-end overflow-hidden bg-linear-to-b from-[#c4c4c4] to-[#dadada] pb-[5px] pl-[10px] font-['Noto_Sans_CJK_SC',sans-serif] text-[12px] leading-[13px] whitespace-nowrap text-black">
      <span className="w-[48px]">系统</span>
      <span className="w-[49px]">报价</span>
      <span className="w-[49px]">分析</span>
      <span className="w-[49px]">扩展</span>
      <span className="w-[73px] text-[#ff1010]">特色功能</span>
      <span className="w-[94px]">智能选股工具</span>
      <span className="w-[48px]">资讯</span>
      <span className="w-[332px]">工具</span>
      <span className="text-[#f06030]">商品期货 智能服务</span>
      <div className="absolute right-[176px] bottom-[3px] h-3 w-[74px] rounded border border-[#888] bg-[#ccc]" />
      <div className="absolute right-[99px] bottom-[3px] h-3 w-[74px] rounded border border-[#888] bg-[#ccc]" />
    </div>
  );
}

const SIDE_TABS = ["技术分析", "国内期货", "股指期货", "期权报价", "期权策略", "热点排名", "新闻资讯"];

function SideTabs() {
  return (
    <nav className="w-5 shrink-0 border-r-2 border-[#d0ccc8] bg-linear-to-b from-[#e0e0e0] to-[#b8b8b8]">
      {SIDE_TABS.map((tab, i) => (
        <button key={tab} className={`relative block w-full pl-[2px] ${i === 0 ? "h-20 pb-4" : "h-[82px] pb-2"}`}>
          <svg className="absolute inset-0" width="18" height="82">
            <path
              d={i === 0 ? "M18 .5H4.500L2.500 2.500V67.500L18 78.500z" : "M18 .5H4.500L2.500 2.500V69.500L18 80.500z"}
              fill={i === 0 ? "#707070" : "#f0efe9"}
              stroke="#505050"
            />
            {i === 0 && <path d="M8 61l6 4-6 4z" fill="#fff" />}
          </svg>
          <span
            className={`relative mx-auto block w-3 font-['Noto_Sans_CJK_SC',sans-serif] text-[12px] leading-3 break-all ${
              i === 0 ? "text-white" : "text-[#404040]"
            }`}
          >
            {tab}
          </span>
        </button>
      ))}
    </nav>
  );
}

const G = "text-[#00e800]";
const R = "text-[#ff3c3c]";
const Y = "text-[#ffff00]";
const W = "text-[#f0f0f0]";

const QUOTE = [
  ["最新", "2071.0", G, "结算", "2065.5", G],
  ["涨跌", "-24.0", G, "昨结", "2095.0", W],
  ["幅度", "-1.15%", G, "开盘", "2050.0", G],
  ["总手", "391120", Y, "最高", "2081.0", G],
  ["现手", "12", Y, "最低", "2049.0", G],
  ["涨停", "2220.5", R, "跌停", "1969.5", G],
  ["持仓", "301796", Y, "仓差", "-57816", Y],
  ["外盘", "197893", R, "内盘", "193227", G],
];

const TICKS = [
  ["11:17", "2073.0", "220", R, "-84", "空平"],
  [":29", "2076.0", "504", R, "-122", "空平"],
  [":29", "2076.0", "330", R, "-136", "空平"],
  [":34", "2073.0", "536", G, "-324", "多平"],
  ["13:30", "2065.0", "278", G, "+96", "空开"],
  ["13:31", "2062.0", "290", G, "+130", "空开"],
  ["13:32", "2065.0", "292", R, "-4", "空平"],
  ["13:34", "2064.5", "210", G, "-62", "多平"],
  ["13:37", "2067.0", "200", R, "-188", "空平"],
  ["13:49", "2069.5", "246", R, "-36", "空平"],
  ["14:12", "2071.5", "248", R, "-34", "空平"],
  ["14:30", "2061.0", "224", G, "-6", "多平"],
  [":21", "2061.5", "200", R, "-106", "空平"],
  ["14:47", "2067.0", "12726", R, "+2658", "多开"],
  ["14:54", "2069.5", "250", R, "+84", "多开"],
  [":30", "2070.0", "238", R, "-88", "空平"],
];

function BidAsk({ label, price, volume }: { label: string; price: string; volume: string }) {
  return (
    <div className="flex h-[31px] items-center border-b border-[#c4140a] pl-[5px] font-['Liberation_Sans','Noto_Sans_CJK_SC',sans-serif]">
      <span className="w-[42px] text-[14px] text-[#e8e8e8]">{label}</span>
      <span className="w-20 text-[21px] font-bold text-[#00e800]">{price}</span>
      <span className="text-[21px] font-bold text-[#ffff00]">{volume}</span>
    </div>
  );
}

function QuotePanel() {
  return (
    <aside className="flex w-[243px] shrink-0 flex-col border-r-2 border-l border-r-[#d4d0cc] border-l-[#c4140a] font-['Liberation_Sans','Noto_Sans_CJK_SC',sans-serif] text-[14px]">
      <h2 className="flex h-6 items-center pl-[38px] font-['Liberation_Mono','Noto_Sans_CJK_SC',monospace] whitespace-nowrap text-[#e8e000]">
        <span className="text-[19px]">焦炭</span>
        <span className="text-[17px]">1909(j1909)</span>
      </h2>
      <div className="flex h-[6px] border-y border-[#c4140a]">
        <div className="w-[72%] bg-[#ff3838]" />
        <div className="flex-1 bg-[#00e800]" />
      </div>
      <BidAsk label="卖出" price="2071.0" volume="11" />
      <BidAsk label="买入" price="2070.5" volume="29" />
      <dl className="border-b border-[#c4140a]">
        {QUOTE.map(([l1, v1, c1, l2, v2, c2]) => (
          <div key={l1} className="flex h-5 items-center pr-[5px] pl-[5px] whitespace-nowrap">
            <dt className="w-10 text-[#e8e8e8]">{l1}</dt>
            <dd className={`w-[68px] text-right font-bold ${c1}`}>{v1}</dd>
            <dt className="w-[52px] pl-[13px] text-[#e8e8e8]">{l2}</dt>
            <dd className={`flex-1 text-right font-bold ${c2}`}>{v2}</dd>
          </div>
        ))}
      </dl>
      <table className="w-full table-fixed text-right leading-[22px] whitespace-nowrap">
        <thead>
          <tr className="h-[22px] text-[#808080]">
            <th className="w-[47px] pl-[5px] text-left font-normal">北京</th>
            <th className="w-[58px] font-normal">价格</th>
            <th className="w-12 font-normal">
              <div className="-ml-2">✓大单</div>
            </th>
            <th className="w-12 font-normal">仓差</th>
            <th className="pr-1 font-normal">性质</th>
          </tr>
        </thead>
        <tbody>
          {TICKS.map(([time, price, vol, tone, diff, kind], i) => (
            <tr key={i} className="h-[22px] font-bold">
              <td
                className={
                  time.startsWith(":")
                    ? "pr-1 text-[12px] font-normal text-[#e0e0e0]"
                    : "pl-[5px] text-left text-[#f0f0f0]"
                }
              >
                {time}
              </td>
              <td className="text-[#00e800]">{price}</td>
              <td className={tone}>{vol}</td>
              <td className="text-[#ffff00]">{diff}</td>
              <td className={`pr-1 font-normal ${tone}`}>{kind}</td>
            </tr>
          ))}
        </tbody>
      </table>
      <div className="mt-auto flex h-[17px] border-b border-[#d4d0cc]">
        <button className="h-4 w-[37px] rounded-b-sm border-r border-b border-[#c4140a] text-[12px] leading-[14px] text-[#f0f0f0]">
          笔
        </button>
        <div className="flex-1 border-t border-[#c4140a]" />
      </div>
    </aside>
  );
}

function TitleBar() {
  return (
    <div className="flex h-[18px] items-center pr-[1px] pl-[2px] font-['Noto_Sans_CJK_SC',sans-serif] text-[12px] leading-[18px] whitespace-nowrap text-[#e8e8e8]">
      <h1 className="flex-1">
        焦炭
        <span className="font-['Liberation_Sans'] text-[11px]">1909 (020709)&lt;</span>
        日线
        <span className="font-['Liberation_Sans'] text-[11px]">&gt;</span>
      </h1>
      <a href="#overlay" className="mr-5 text-[#80c0ff] underline">
        商品叠加
      </a>
      <a href="#period" className="mr-[21px] text-[#80c0ff] underline">
        周期
      </a>
      <div className="flex gap-px">
        <button aria-label="向左">
          <svg width="16" height="14" viewBox="0 0 16 14" fill="none" stroke="#80c0ff">
            <path d="M.5.5h15v13H.5zM2.500 7l4-4v2.500h7v3h-7V11z" />
          </svg>
        </button>
        <button aria-label="向右">
          <svg width="16" height="14" viewBox="0 0 16 14" fill="none" stroke="#80c0ff">
            <path d="M.5.5h15v13H.5zM13.500 7l-4-4v2.500h-7v3h7V11z" />
          </svg>
        </button>
        <button aria-label="布局">
          <svg width="16" height="14" viewBox="0 0 16 14" fill="none" stroke="#80c0ff">
            <path d="M.5.5h15v13H.5zM10.500 1v12M1 9.500h9M12 3.500h3M12 6.500h3M12 9.500h3" />
          </svg>
        </button>
      </div>
    </div>
  );
}

function Brand() {
  return (
    <div className="absolute top-[9px] right-[5px] flex gap-[3px]">
      <svg width="32" height="28" viewBox="0 0 32 28">
        <rect width="32" height="28" rx="3" fill="#e05a1c" />
        <ellipse cx="16" cy="14" rx="13" ry="11.500" fill="none" stroke="#fff" strokeWidth="2" />
        <path d="M9 8.500h14M4 13.500h24M10 20h12M16 8.500V20" stroke="#fff" strokeWidth="2.500" fill="none" />
      </svg>
      <div className="w-[67px] whitespace-nowrap">
        <div className="flex h-[15px] items-center text-[#e8642c]">
          <span className="font-['DejaVu_Sans',sans-serif] text-[22px]">5e</span>
          <span className="font-['Noto_Sans_CJK_SC',sans-serif] text-[18px] font-bold">天资</span>
        </div>
        <div className="font-['DejaVu_Sans',sans-serif] text-[14px] leading-4 text-[#f8b490]">5etz.com</div>
      </div>
    </div>
  );
}

function SpeedWidget() {
  return (
    <svg className="absolute bottom-0 left-0" width="128" height="28" viewBox="0 0 128 28">
      <defs>
        <linearGradient id="ball" x1="0" y1="0" x2="0" y2="1">
          <stop offset="0" stopColor="#1c6c48" />
          <stop offset=".25" stopColor="#48a878" />
          <stop offset=".3" stopColor="#50c860" />
          <stop offset="1" stopColor="#60d050" />
        </linearGradient>
      </defs>
      <path d="M24 7h86q14 2 16 21H24z" fill="#f4f4f4" stroke="#c8c8c8" />
      <path d="M50 26l20-3 2 5H48z" fill="#ff6a3c" />
      <circle cx="25" cy="26" r="24" fill="#e8f4ec" />
      <circle cx="25" cy="26" r="22" fill="url(#ball)" />
      <text x="24" y="28" textAnchor="middle" fill="#fff" className="font-['DejaVu_Sans'] text-[12px] font-bold">64%</text>
      <path d="M56.500 22v-6M54 18l2.500-3 2.500 3z" stroke="#f04030" fill="#f04030" />
      <text x="80" y="22" fill="#111" className="font-['Liberation_Sans'] text-[9px]">0K/s</text>
      <circle cx="112" cy="26" r="9" fill="#3c8ce8" stroke="#b8d4f8" />
      <path d="M112 20v8M106 26h12" stroke="#fff" strokeWidth="3" />
      <circle cx="118" cy="20" r="4" fill="#e02c2c" />
    </svg>
  );
}

export default function App() {
  return (
    <div className="relative flex min-h-screen flex-col overflow-hidden bg-black">
      <MenuBar />
      <Toolbar />
      <div className="flex flex-1">
        <SideTabs />
        <main className="min-w-0 flex-1 border-b border-[#b0b0b0]">
          <TitleBar />
          <Charts />
        </main>
        <QuotePanel />
      </div>
      <svg className="absolute top-[31px] right-[2px]" width="16" height="15" fill="none" stroke="#80c0ff">
        <path d="M.5.5h15v14H.5zM3.500 4.500h9v7h-9z" />
      </svg>
      <Brand />
      <SpeedWidget />
    </div>
  );
}
